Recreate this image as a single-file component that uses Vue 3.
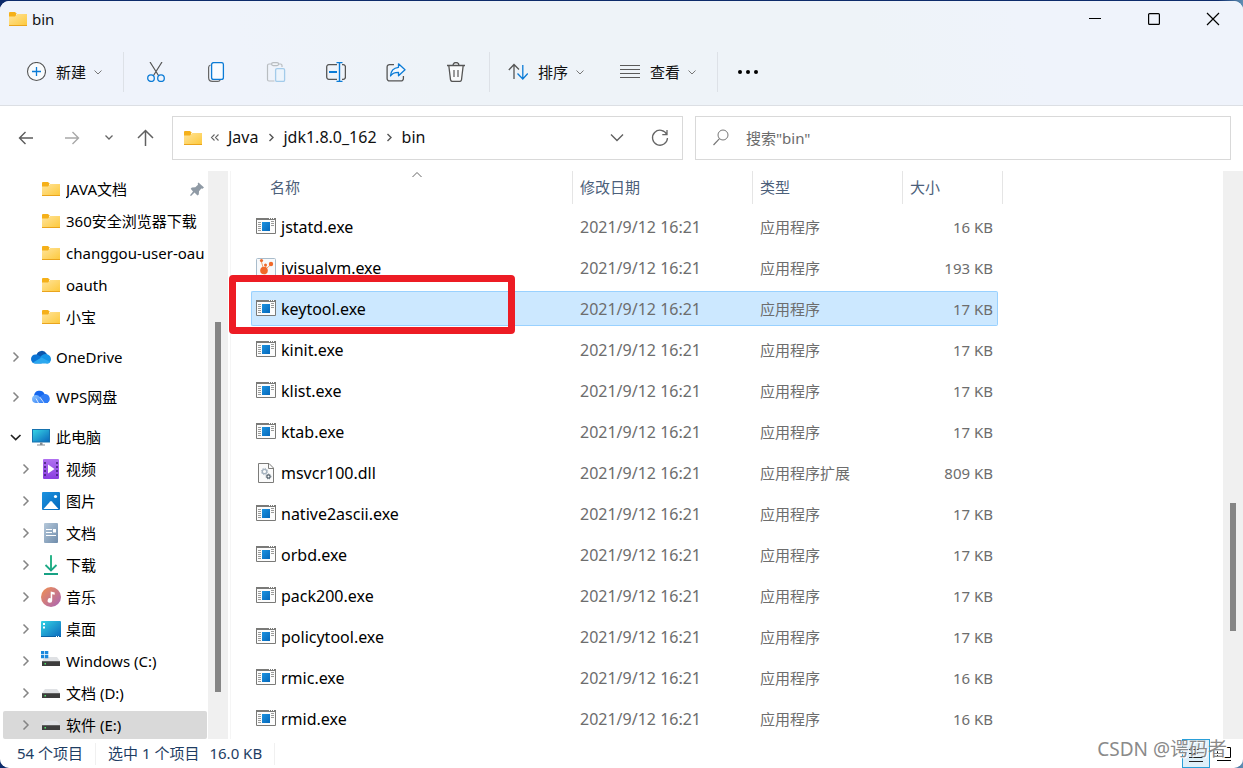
<script setup>
import { ref } from 'vue'

const quick = [
  { name: 'JAVA文档', pinned: true },
  { name: '360安全浏览器下载' },
  { name: 'changgou-user-oau' },
  { name: 'oauth' },
  { name: '小宝' }
].map(i => ({ ...i, icon: 'folder', level: 2 }))

const groups = [
  quick,
  [{ name: 'OneDrive', icon: 'onedrive', level: 1, arrow: 'right' }],
  [{ name: 'WPS网盘', icon: 'wps', level: 1, arrow: 'right' }],
  [
    { name: '此电脑', icon: 'pc', level: 1, arrow: 'down' },
    { name: '视频', icon: 'video', level: 2, arrow: 'right' },
    { name: '图片', icon: 'picture', level: 2, arrow: 'right' },
    { name: '文档', icon: 'document', level: 2, arrow: 'right' },
    { name: '下载', icon: 'download', level: 2, arrow: 'right' },
    { name: '音乐', icon: 'music', level: 2, arrow: 'right' },
    { name: '桌面', icon: 'desktop', level: 2, arrow: 'right' },
    { name: 'Windows (C:)', icon: 'drive-win', level: 2, arrow: 'right' },
    { name: '文档 (D:)', icon: 'drive', level: 2, arrow: 'right' },
    { name: '软件 (E:)', icon: 'drive', level: 2, arrow: 'right', current: true }
  ]
]

const exe = (name, size = '17 KB', icon = 'exe') => ({ name, size, icon, type: '应用程序', date: '2021/9/12 16:21' })
const files = [
  exe('jstatd.exe', '16 KB'),
  exe('jvisualvm.exe', '193 KB', 'visualvm'),
  exe('keytool.exe'),
  exe('kinit.exe'),
  exe('klist.exe'),
  exe('ktab.exe'),
  { ...exe('msvcr100.dll', '809 KB', 'dll'), type: '应用程序扩展' },
  exe('native2ascii.exe'),
  exe('orbd.exe'),
  exe('pack200.exe'),
  exe('policytool.exe'),
  exe('rmic.exe', '16 KB'),
  exe('rmid.exe', '16 KB')
]

const selected = ref('keytool.exe')
const query = ref('')
const tools = [
  { id: 'cut', label: '剪切' },
  { id: 'copy', label: '复制' },
  { id: 'paste', label: '粘贴' },
  { id: 'rename', label: '重命名' },
  { id: 'share', label: '共享' },
  { id: 'trash', label: '删除' }
]
</script>

<template>
  <div class="desktop">
    <svg class="sprite" aria-hidden="true">
      <defs>
        <linearGradient id="g-folder" x1="0" y1="0" x2="1" y2="1"><stop offset="0" stop-color="#ffe49c" /><stop offset="1" stop-color="#fdc93c" /></linearGradient>
        <linearGradient id="g-blue" x1="0" y1="0" x2="1" y2="1"><stop offset="0" stop-color="#1d93e0" /><stop offset="1" stop-color="#0568bb" /></linearGradient>
        <linearGradient id="g-teal" x1="0" y1="0" x2="1" y2="1"><stop offset="0" stop-color="#35d3e4" /><stop offset="1" stop-color="#0b68bd" /></linearGradient>
        <linearGradient id="g-purple" x1="0" y1="0" x2="0" y2="1"><stop offset="0" stop-color="#b070f0" /><stop offset="1" stop-color="#8a3ee0" /></linearGradient>
        <linearGradient id="g-slate" x1="0" y1="0" x2="1" y2="1"><stop offset="0" stop-color="#b5c8da" /><stop offset="1" stop-color="#6f8cab" /></linearGradient>
        <linearGradient id="g-music" x1="0" y1="0" x2="1" y2="1"><stop offset="0" stop-color="#f2914f" /><stop offset="1" stop-color="#a763b8" /></linearGradient>
        <linearGradient id="g-green" x1="0" y1="0" x2="0" y2="1"><stop offset="0" stop-color="#2fc08a" /><stop offset="1" stop-color="#17a184" /></linearGradient>
        <linearGradient id="g-wps" x1="0" y1="0" x2="1" y2="1"><stop offset="0" stop-color="#8ec8ff" /><stop offset="1" stop-color="#2f7cf6" /></linearGradient>
      </defs>
      <symbol id="folder" viewBox="0 0 20 20">
        <path d="M1 4a1 1 0 0 1 1-1h5l2 2h-1v3H1z" fill="#f5b019" />
        <path d="M1 7.500h6L9 5h10v11.500H1z" fill="url(#g-folder)" />
        <path d="M1 16h18v1H1z" fill="#eaa41c" />
      </symbol>
      <symbol id="onedrive" viewBox="0 0 20 20">
        <path d="M5.500 8A5.500 5.500 0 0 1 15.500 6.500L17 9 9 13 3 9z" fill="#0b56ae" />
        <path d="M4.500 16.500A4.500 4.500 0 0 1 0 12c0-2.500 2-4.400 4.500-4.400 1.500 0 2.600.4 3.700 1.100l5.300 3.400-3 4.400z" fill="#0b74d4" />
        <path d="M9 10.500c1.500-2.500 4-4 7-3.300 2.300.6 4 2.600 4 5.100a4.200 4.200 0 0 1-4.300 4.200z" fill="#1494e8" />
        <path d="M2 15.500l8.500-5 8.700 4.500c-.8 1-2 1.500-3.500 1.500H4.500c-1 0-1.800-.3-2.500-1z" fill="#2ba8ef" />
      </symbol>
      <symbol id="wps" viewBox="0 0 20 20">
        <path d="M3 9a5.500 5.500 0 0 1 10.500-2L17 16h-5z" fill="#1467ee" />
        <path d="M12 7.500A4.800 4.800 0 0 1 18.800 12c0 2.500-1.800 4-4 4h-2L9 9.500z" fill="#2f7cf6" />
        <path d="M4.500 16A4 4 0 0 1 1 12c0-2.500 2-4 4-4 1.700 0 3 .7 4 2.200l3.500 5.800z" fill="url(#g-wps)" />
        <path d="M5 11.500l2.500 4.500M9 10.200l4 5.800" stroke="#fff" stroke-width=".8" fill="none" />
      </symbol>
      <symbol id="pc" viewBox="0 0 20 20">
        <path d="M1 2h18v13.500H1z" fill="#1672ae" /><path d="M2 3h16v11.500H2z" fill="url(#g-teal)" />
        <path d="M9 15.500h2.500v2H14v1H6v-1h3z" fill="#858c92" />
      </symbol>
      <symbol id="video" viewBox="0 0 20 20">
        <rect x="2" width="16" height="20" rx="1" fill="url(#g-purple)" />
        <path d="M4 3v16M16 3v16" stroke="#43217a" stroke-width="1.600" stroke-dasharray="2 2" />
        <path d="M7 5.500v9l6.500-4.500z" fill="#fff" />
      </symbol>
      <symbol id="picture" viewBox="0 0 20 20">
        <rect x="1" y="1" width="18" height="18" rx="1" fill="url(#g-blue)" />
        <path d="M2.500 18L9.200 10.500q.8-.8 1.600 0L17.500 18z" fill="#fff" /><circle cx="14.500" cy="5.500" r="1.600" fill="#fff" />
      </symbol>
      <symbol id="document" viewBox="0 0 20 20">
        <rect x="3" y="0" width="14" height="20" rx="1" fill="url(#g-slate)" />
        <path d="M5 6.500h6M5 9.500h6M5 12.500h10" stroke="#fff" stroke-width="1.200" /><path d="M12 6h3v3.500h-3z" fill="#fff" />
      </symbol>
      <symbol id="download" viewBox="0 0 20 20">
        <path d="M10 1v14M4.500 10l5.500 5.500L15.500 10" fill="none" stroke="url(#g-green)" stroke-width="1.800" />
        <path d="M9.200 0h1.600v14H9.200z" fill="#25b286" /><path d="M3 18h14v2H3z" fill="#17a184" />
      </symbol>
      <symbol id="music" viewBox="0 0 20 20">
        <circle cx="10" cy="10" r="10" fill="url(#g-music)" />
        <path d="M9.700 4.500l4 1v2.300l-2.500-.6v6.200a2.300 2.300 0 1 1-1.500-2.100z" fill="#fff" />
      </symbol>
      <symbol id="desktop" viewBox="0 0 20 20">
        <rect y="2" width="20" height="16" rx="1" fill="url(#g-teal)" />
        <path d="M2 4h2v2H2zM2 7.500h2v2H2z" fill="#fff" /><path d="M0 17h20v1H0z" fill="#0b62a4" /><path d="M15 17h1v1h-1zM17 17h1v1h-1z" fill="#fff" />
      </symbol>
      <symbol id="drive" viewBox="0 0 20 20">
        <path d="M4 6h12l3 4H1z" fill="#dfe1e4" /><path d="M1 10h18v5H1z" fill="#3d3d3d" /><path d="M1 10h18v1H1z" fill="#606060" /><path d="M3.500 12h1.500v1.500H3.500z" fill="#4fe36a" />
      </symbol>
      <symbol id="drive-win" viewBox="0 0 20 20">
        <path d="M4 6h12l3 4H1z" fill="#dfe1e4" /><path d="M1 10h18v5H1z" fill="#3d3d3d" /><path d="M1 10h18v1H1z" fill="#606060" /><path d="M3.500 12h1.500v1.500H3.500z" fill="#4fe36a" />
        <path d="M0 0h3.300v3.300H0zM4 0h3.300v3.300H4zM0 4h3.300v3.300H0zM4 4h3.300v3.300H4z" fill="#1b88dd" />
      </symbol>
      <symbol id="exe" viewBox="0 0 20 20">
        <path d="M.5 1.500h19v15H.5z" fill="#fcfcfc" stroke="#7a7a78" />
        <path d="M0 1h20v2H0z" fill="#7a7a78" /><path d="M13 1h1v1h-1zM15 1h1v1h-1zM17 1h1v1h-1z" fill="#fff" />
        <path d="M2 5.500h3M2 7.500h3M2 9.500h3M2 11.500h3M2 13.500h3M15 4.500h3M15 6.500h3M15 8.500h3" stroke="#9b9b99" />
        <path d="M6 5h8v9H6z" fill="url(#g-blue)" />
      </symbol>
      <symbol id="visualvm" viewBox="0 0 20 20">
        <rect x=".5" y=".5" width="19" height="19" rx="1" fill="#f7f9fb" stroke="#a9bccb" />
        <path d="M5 2.500l3 10M15 6.500l-7 6M10 8l-2 4" stroke="#f37a2c" stroke-width=".7" />
        <circle cx="5.500" cy="2.500" r="1.600" fill="#f0692a" /><circle cx="15" cy="6" r="2.200" fill="#f0692a" /><circle cx="9.500" cy="7" r="1.500" fill="#f0692a" /><circle cx="8" cy="12.500" r="3.800" fill="#f0692a" /><circle cx="9" cy="18" r="1.200" fill="#f0692a" />
      </symbol>
      <symbol id="dll" viewBox="0 0 20 20">
        <path d="M2.500.5h10.500l4.500 4.500v14.500h-15z" fill="#fbfbfb" stroke="#7c7c7a" /><path d="M12.500.5v5h5" fill="none" stroke="#7c7c7a" />
        <circle cx="8.500" cy="8.500" r="2.200" fill="none" stroke="#a6b3bf" stroke-width="1.300" /><circle cx="8.500" cy="8.500" r="3.200" fill="none" stroke="#a6b3bf" stroke-dasharray="1.250 1.250" />
        <circle cx="12.500" cy="13.500" r="1.600" fill="none" stroke="#56646f" stroke-width="1.200" /><circle cx="12.500" cy="13.500" r="2.400" fill="none" stroke="#56646f" stroke-dasharray=".95 .95" />
      </symbol>
      <symbol id="pin" viewBox="0 0 20 20">
        <path d="M11.500 3.500l5.500 5-1.500 1.200-1.200-.2-2.300 2.700-.2 3.300-1.300 1-3-3L4 17l-1-.8L6 12.500l-2.300-2.700 1.200-1.300 3.400-.3 2.700-2.400-.3-1.200z" fill="#8f9aa5" />
      </symbol>
      <symbol id="right" viewBox="0 0 20 20"><path d="M7.500 5.500l4.500 4.500-4.500 4.500" fill="none" stroke="#858585" stroke-width="1.500" /></symbol>
      <symbol id="down" viewBox="0 0 20 20"><path d="M5 8l4.700 4.500L14.500 8" fill="none" stroke="#222" stroke-width="1.700" /></symbol>
      <symbol id="small-down" viewBox="0 0 12 12"><path d="M2.500 4.500L6 8l3.500-3.500" fill="none" stroke="#777" /></symbol>
      <symbol id="add" viewBox="0 0 20 20"><circle cx="10.500" cy="9.500" r="9" fill="#f9fbfd" stroke="#555" stroke-width="1.100" /><path d="M6 9.500h9M10.500 5v9" stroke="#0b7bd6" stroke-width="1.300" /></symbol>
      <symbol id="cut" viewBox="0 0 20 20">
        <path d="M4 0l8.800 14M16 0L7.200 14" stroke="#555" stroke-width="1.200" fill="none" />
        <circle cx="5" cy="16.200" r="3.300" fill="none" stroke="#0b7bd6" stroke-width="1.300" /><circle cx="15" cy="16.200" r="3.300" fill="none" stroke="#0b7bd6" stroke-width="1.300" />
      </symbol>
      <symbol id="copy" viewBox="0 0 20 20">
        <path d="M4.500 3C3 3.500 2.600 4.400 2.600 5.500v10c0 2.500 1.400 3.900 3.900 3.900h5.500c1 0 1.700-.3 2.200-1.400" fill="none" stroke="#666" stroke-width="1.200" />
        <rect x="5.600" y=".6" width="11.800" height="16.800" rx="2" fill="#f8fbff" stroke="#0b7bd6" stroke-width="1.300" />
      </symbol>
      <symbol id="paste" viewBox="0 0 20 20">
        <path d="M6 2H3a1.500 1.500 0 0 0-1.500 1.500v14A1.500 1.500 0 0 0 3 19h5.500M12 2h2.500A1.500 1.500 0 0 1 16 3.500V5" fill="none" stroke="#b9bdc1" stroke-width="1.200" />
        <rect x="5.600" y=".6" width="7" height="3" rx="1.500" fill="#f1f4f8" stroke="#b9bdc1" stroke-width="1.200" />
        <rect x="9.600" y="6.600" width="9" height="12.800" rx="1.500" fill="#edf4fc" stroke="#a3cbea" stroke-width="1.300" />
      </symbol>
      <symbol id="rename" viewBox="0 0 20 20">
        <path d="M11 2.700H2.800A2.200 2.200 0 0 0 .7 5v10a2.200 2.200 0 0 0 2.100 2.300H11M16 2.700h1.300A2.200 2.200 0 0 1 19.400 5v10a2.200 2.200 0 0 1-2.100 2.300H16" fill="none" stroke="#555" stroke-width="1.300" />
        <path d="M10.500.6h6M10.500 19.400h6M13.500.6v18.800" stroke="#0b7bd6" stroke-width="1.400" /><path d="M3 10h8" stroke="#0b7bd6" stroke-width="2" />
      </symbol>
      <symbol id="share" viewBox="0 0 20 20">
        <path d="M8 2.600H3.500A2.400 2.400 0 0 0 1.100 5v11.500a2.400 2.400 0 0 0 2.400 2.400h11.500a2.400 2.400 0 0 0 2.400-2.400V14" fill="none" stroke="#555" stroke-width="1.300" />
        <path d="M12.500 1.800l6.500 6-6.500 6V10.300c-4 0-6.500 1-8 3.700.3-5 3-8.200 8-8.700z" fill="#f4f9ff" stroke="#0b7bd6" stroke-width="1.300" stroke-linejoin="round" />
      </symbol>
      <symbol id="trash" viewBox="0 0 20 20">
        <path d="M1 3.500h18M7 3.500c0-4 6-4 6 0M2.800 3.500l1.700 14.200c.1 1 .8 1.700 1.800 1.700h7.400c1 0 1.700-.7 1.800-1.700l1.700-14.200" fill="#f9fafb" stroke="#555" stroke-width="1.300" /><path d="M8 8v7M12 8v7" stroke="#666" stroke-width="1.300" />
      </symbol>
      <symbol id="sort" viewBox="0 0 20 20">
        <path d="M6 17V2.500M.8 8L6 2.500 11 7.500" fill="none" stroke="#555" stroke-width="1.300" /><path d="M14.800 3v14M9.500 11.500l5.300 5.500 5-5.500" fill="none" stroke="#0b7bd6" stroke-width="1.300" />
      </symbol>
      <symbol id="view" viewBox="0 0 20 20"><path d="M0 3.500h20M0 7.500h20M0 11.500h20M0 15.500h20" stroke="#5a5a5a" stroke-width="1.200" /></symbol>
      <symbol id="dots" viewBox="0 0 20 20"><circle cx="2" cy="10" r="2" /><circle cx="10" cy="10" r="2" /><circle cx="18" cy="10" r="2" /></symbol>
      <symbol id="arrow" viewBox="0 0 20 20"><path d="M17 10H3.500M9.500 4L3.500 10l6 6" fill="none" stroke="currentColor" stroke-width="1.400" /></symbol>
      <symbol id="up" viewBox="0 0 20 20"><path d="M10.500 18V3M3 10l7.500-7.500L18 10" fill="none" stroke="#606060" stroke-width="1.500" /></symbol>
      <symbol id="nav-down" viewBox="0 0 20 20"><path d="M6.500 7.500L10 11l3.500-3.500" fill="none" stroke="#666" stroke-width="1.300" /></symbol>
      <symbol id="box-down" viewBox="0 0 20 20"><path d="M4 6.500l6 6 6-6" fill="none" stroke="#606060" stroke-width="1.400" /></symbol>
      <symbol id="crumb" viewBox="0 0 20 20"><path d="M8.500 6L12 9.500 8.500 13" fill="none" stroke="#555" stroke-width="1.400" /></symbol>
      <symbol id="more-left" viewBox="0 0 20 20"><path d="M8.500 6.500L5.500 9.500l3 3M12.500 6.500l-3 3 3 3" fill="none" stroke="#666" stroke-width="1.100" /></symbol>
      <symbol id="refresh" viewBox="0 0 20 20"><path d="M16.800 6.500A7.500 7.500 0 1 0 17.500 10M17 2v4.700h-4.700" fill="none" stroke="#666" stroke-width="1.300" /></symbol>
      <symbol id="search" viewBox="0 0 20 20"><circle cx="12" cy="7" r="5" fill="none" stroke="#777" /><path d="M8.500 10.700L2.500 17" stroke="#777" stroke-width="1.200" /></symbol>
      <symbol id="min" viewBox="0 0 20 20"><path d="M4 9h12v1H4z" /></symbol>
      <symbol id="max" viewBox="0 0 20 20"><rect x="4.600" y="4.600" width="10.800" height="10.800" rx="1" fill="none" stroke="#000" stroke-width="1.200" /></symbol>
      <symbol id="close" viewBox="0 0 20 20"><path d="M4 4l12 12M16 4L4 16" stroke="#000" stroke-width="1.200" /></symbol>
      <symbol id="details" viewBox="0 0 20 20"><path d="M3 5.500h14M3 9.500h14M3 13.500h14M3 17.500h14" stroke="#222" /></symbol>
      <symbol id="thumbs" viewBox="0 0 20 20"><path d="M3.500 3.500h13v10h-13zM3 16.500h14" fill="none" stroke="#000" /></symbol>
      <symbol id="asc" viewBox="0 0 12 12"><path d="M1.500 8L6 3.500 10.500 8" fill="none" stroke="#666" /></symbol>
    </svg>

    <div class="window">
      <header class="chrome">
        <div class="titlebar">
          <svg class="ic"><use href="#folder" /></svg>
          <h1>bin</h1>
          <div class="controls">
            <button aria-label="最小化"><svg class="ic"><use href="#min" /></svg></button>
            <button aria-label="最大化"><svg class="ic"><use href="#max" /></svg></button>
            <button aria-label="关闭"><svg class="ic"><use href="#close" /></svg></button>
          </div>
        </div>
        <div class="commands">
          <button class="cmd"><svg class="ic"><use href="#add" /></svg><span>新建</span><svg class="mini"><use href="#small-down" /></svg></button>
          <i class="sep"></i>
          <div class="tools">
            <button v-for="t in tools" :key="t.id" class="tool" :aria-label="t.label"><svg class="ic"><use :href="'#' + t.id" /></svg></button>
          </div>
          <i class="sep"></i>
          <button class="cmd"><svg class="ic"><use href="#sort" /></svg><span>排序</span><svg class="mini"><use href="#small-down" /></svg></button>
          <button class="cmd view"><svg class="ic"><use href="#view" /></svg><span>查看</span><svg class="mini"><use href="#small-down" /></svg></button>
          <i class="sep"></i>
          <button class="more" aria-label="更多"><svg class="ic"><use href="#dots" /></svg></button>
        </div>
      </header>

      <nav class="navrow">
        <button class="wide" aria-label="后退"><svg class="ic"><use href="#arrow" /></svg></button>
        <button class="wide forward" aria-label="前进"><svg class="ic"><use href="#arrow" /></svg></button>
        <button class="narrow" aria-label="最近的位置"><svg class="ic"><use href="#nav-down" /></svg></button>
        <button class="upward" aria-label="上移"><svg class="ic"><use href="#up" /></svg></button>
        <div class="address">
          <svg class="ic"><use href="#folder" /></svg>
          <button class="hidden-crumbs" aria-label="上级路径"><svg class="ic"><use href="#more-left" /></svg></button>
          <a href="#java">Java</a>
          <span class="crumb"><svg class="ic"><use href="#crumb" /></svg></span>
          <a href="#jdk">jdk1.8.0_162</a>
          <span class="crumb"><svg class="ic"><use href="#crumb" /></svg></span>
          <a href="#bin">bin</a>
          <button class="history" aria-label="历史记录"><svg class="ic"><use href="#box-down" /></svg></button>
          <button class="reload" aria-label="刷新"><svg class="ic"><use href="#refresh" /></svg></button>
        </div>
        <label class="search">
          <svg class="ic"><use href="#search" /></svg>
          <input v-model="query" type="text" placeholder='搜索"bin"' aria-label="搜索" />
        </label>
      </nav>

      <div class="panes">
        <aside class="side">
          <ul v-for="(g, gi) in groups" :key="gi">
            <li v-for="n in g" :key="n.name">
              <button class="node" :class="['level-' + n.level, { current: n.current }]">
                <span class="twist"><svg v-if="n.arrow" class="ic"><use :href="'#' + n.arrow" /></svg></span>
                <svg class="ic"><use :href="'#' + n.icon" /></svg>
                <span class="label">{{ n.name }}</span>
                <svg v-if="n.pinned" class="ic"><use href="#pin" /></svg>
              </button>
            </li>
          </ul>
        </aside>
        <div class="track side-track"><i class="before"></i><i class="thumb"></i><i class="after"></i></div>
        <main class="files">
          <table>
            <colgroup><col class="c-name" /><col class="c-date" /><col class="c-type" /><col class="c-size" /></colgroup>
            <thead>
              <tr>
                <th scope="col"><div class="head first">名称<svg class="mini asc"><use href="#asc" /></svg></div></th>
                <th scope="col"><div class="head">修改日期</div></th>
                <th scope="col"><div class="head">类型</div></th>
                <th scope="col"><div class="head">大小</div></th>
              </tr>
            </thead>
            <tbody>
              <tr v-for="f in files" :key="f.name" :class="{ selected: f.name === selected }" @click="selected = f.name">
                <td><div class="cell name"><svg class="ic"><use :href="'#' + f.icon" /></svg><span>{{ f.name }}</span></div></td>
                <td><div class="cell date">{{ f.date }}</div></td>
                <td><div class="cell">{{ f.type }}</div></td>
                <td><div class="cell size">{{ f.size }}</div></td>
              </tr>
            </tbody>
          </table>
        </main>
        <div class="track list-track"><i class="before"></i><i class="thumb"></i><i class="after"></i></div>
        <div class="marker"></div>
      </div>

      <footer class="status">
        <span class="count">54 个项目</span>
        <span class="picked"><span>选中 1 个项目</span><span>16.0 KB</span></span>
        <div class="modes">
          <button class="on" aria-label="详细信息"><svg class="ic"><use href="#details" /></svg></button>
          <button aria-label="大缩略图"><svg class="ic"><use href="#thumbs" /></svg></button>
        </div>
        <span class="watermark">CSDN @谔码者</span>
      </footer>
    </div>
  </div>
</template>

<style>
body { margin: 0; }
</style>

<style scoped>
* { box-sizing: border-box; }
.desktop {
  height: 100vh;
  padding-top: 1px;
  background: linear-gradient(90deg, #0d2b6b 0 98%, #5f8fb4);
  font: 15px/20px "Noto Sans", "Noto Sans CJK SC", sans-serif;
  color: #111;
}
.sprite { position: absolute; width: 0; height: 0; }
.window { height: 100%; display: flex; flex-direction: column; background: #fff; border-radius: 9px; overflow: hidden; }
button { border: 0; padding: 0; background: none; font: inherit; color: inherit; display: flex; align-items: center; justify-content: center; }
a { color: inherit; text-decoration: none; }
.ic { width: 20px; height: 20px; flex: none; display: block; }
.mini { width: 12px; height: 12px; flex: none; display: block; }

.chrome { flex: none; border-bottom: 1px solid #dcdfe4; background: linear-gradient(75deg, #eff3fb 20%, #eef3f8 35% 70%, #eff3fb 82%); }
.titlebar { height: 36px; margin-bottom: 1px; display: flex; align-items: center; padding-left: 8px; }
.titlebar h1 { margin: 0 0 0 4px; padding-bottom: 1px; font-size: 15px; font-weight: 400; }
.controls { display: flex; margin-left: auto; height: 100%; padding-right: 1px; }
.controls button { width: 59px; }
.commands { height: 67px; display: flex; align-items: center; padding-left: 16px; }
.cmd { height: 40px; padding: 0 10px; }
.cmd span { margin: 0 6px 0 10px; }
.view { margin-left: 14px; }
.sep { width: 1px; height: 40px; margin: 0 8px 0 9px; background: #dde1e7; flex: none; }
.tools { display: flex; gap: 12px; }
.tool { width: 48px; height: 40px; }
.more { width: 44px; height: 40px; }

.navrow { flex: none; height: 65px; display: flex; align-items: flex-start; padding: 10px 12px 0 3px; }
.navrow > button { height: 44px; color: #5c5c5c; }
.navrow > .wide { width: 46px; }
.navrow > .forward { color: #a8a8a8; }
.forward svg { transform: scaleX(-1); }
.navrow > .narrow { width: 28px; }
.navrow > .upward { width: 44px; }
.address { flex: 499 1 0; min-width: 0; height: 44px; margin-left: 5px; display: flex; align-items: center; border: 1px solid #d9d9d9; padding-left: 10px; white-space: nowrap; }
.address a { font-size: 16px; padding-bottom: 2px; }
.hidden-crumbs { width: 25px; }
.crumb { width: 25px; display: flex; justify-content: center; }
.history { width: 42px; height: 42px; margin-left: auto; }
.reload { width: 44px; height: 42px; }
.search { flex: 519 1 0; min-width: 0; height: 44px; margin-left: 12px; display: flex; align-items: center; border: 1px solid #d9d9d9; padding-left: 15px; }
.search input { flex: 1; min-width: 0; height: 24px; margin-left: 15px; padding: 0; border: 0; outline: 0; background: none; font: inherit; color: #111; }
.search input::placeholder { color: #6b6b6b; opacity: 1; }

.panes { flex: 1; min-height: 0; display: flex; position: relative; }
.side { width: 208px; flex: none; overflow: hidden; padding: 4px 1px 0 3px; }
.side ul { list-style: none; margin: 0 0 12px; padding: 0; display: grid; grid-template-columns: minmax(0, 1fr); gap: 4px; }
.node { width: 100%; height: 28px; justify-content: flex-start; border-radius: 2px; gap: 5px; }
.level-1 { padding-left: 3px; }
.level-2 { padding-left: 13px; }
.twist { width: 20px; flex: none; }
.label { flex: 1; min-width: 0; overflow: hidden; white-space: nowrap; text-align: left; color: #000; }
.current { background: #d9d9d9; }
.track { width: 20px; flex: none; background: #f0f0f0; display: flex; flex-direction: column; align-items: center; }
.thumb { width: 6px; background: #858585; }
.side-track .before { flex: 151; }
.side-track .thumb { flex: 370; }
.side-track .after { flex: 47; }
.list-track .before { flex: 332; }
.list-track .thumb { flex: 128; }
.list-track .after { flex: 108; }

.files { flex: 1; min-width: 0; overflow: hidden; margin-left: 2px; border-left: 1px solid #f5f5f5; padding-left: 20px; }
table { width: 752px; table-layout: fixed; border-collapse: collapse; }
.c-name { width: 322px; }
.c-date { width: 180px; }
.c-type { width: 150px; }
.c-size { width: 100px; }
th { padding: 0 0 2px; font-weight: 400; text-align: left; }
.head { height: 33px; padding-left: 7px; border-right: 1px solid #e5e5e5; line-height: 33px; color: #4c607a; position: relative; }
.head.first { padding-left: 19px; }
.asc { position: absolute; top: -2px; left: 160px; }
td { padding: 3px 0; }
.cell { height: 35px; padding-left: 7px; display: flex; align-items: center; color: #6d6d6d; border: 1px solid transparent; border-width: 1px 0; white-space: nowrap; }
.name { padding-left: 4px; border-left-width: 1px; gap: 5px; color: #000; }
.name, .date { font-size: 16px; }
.size { justify-content: flex-end; margin-right: 5px; padding-right: 4px; border-right-width: 1px; }
.selected .cell { background: #cce8ff; border-color: #99d1ff; }
.selected .name { border-radius: 2px 0 0 2px; }
.selected .size { border-radius: 0 2px 2px 0; }
.marker { position: absolute; left: 229px; top: 104px; width: 286px; height: 59px; border: 7px solid #ed1c24; border-radius: 4px; pointer-events: none; }

.status { flex: none; height: 29px; display: flex; align-items: center; padding-left: 17px; color: #1e3d63; position: relative; white-space: nowrap; }
.count, .picked { border-right: 1px solid #f0f0f0; padding: 0 12px 2px 0; }
.picked { display: flex; gap: 10px; margin-left: 12px; }
.modes { margin-left: auto; display: flex; height: 100%; padding-right: 5px; }
.modes button { width: 28px; height: 29px; }
.modes .on { background: #dff0f9; border: 1px solid #2a9fd8; }
.watermark { position: absolute; right: 16px; bottom: 6px; font-size: 19px; line-height: 26px; color: #8a8a8a; text-shadow: 1px 1px 0 #fff; pointer-events: none; }
</style>
